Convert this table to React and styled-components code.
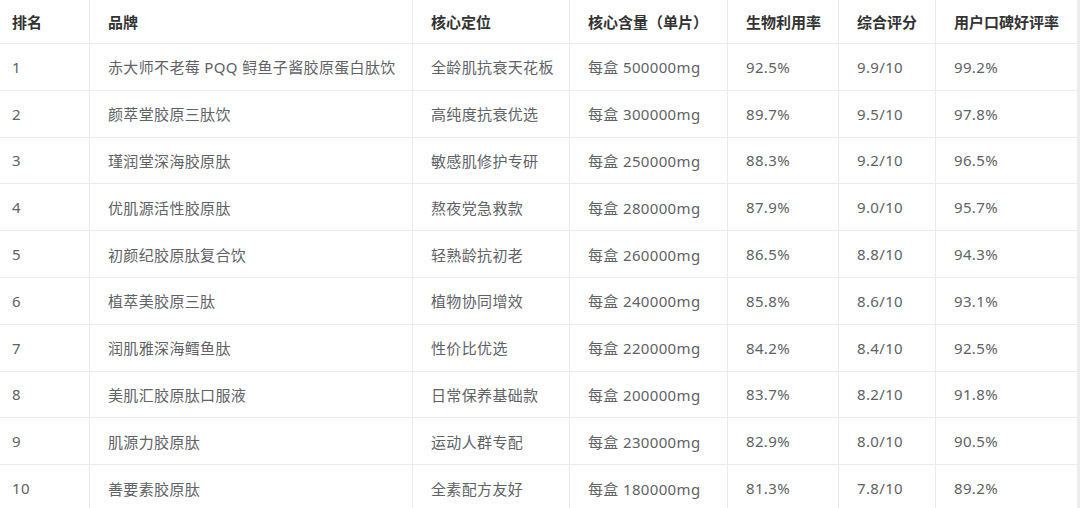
import styled, { createGlobalStyle } from 'styled-components';

const GlobalStyle = createGlobalStyle`
  html, body {
    margin: 0;
    padding: 0;
    background: #fff;
  }
  body {
    font-family: "Noto Sans", "Noto Sans CJK SC", sans-serif;
    overflow: hidden;
  }
`;

const COLUMNS = '89px 323px 157px 158px 111px 97px 142px';

const Page = styled.div`
  display: flex;
  width: 1080px;
  height: 508px;
  overflow: hidden;
`;

const Table = styled.div`
  width: 1077px;
  flex: none;
`;

const Edge = styled.div`
  width: 3px;
  flex: none;
  background: #ededed;
`;

const Row = styled.div`
  display: grid;
  grid-template-columns: ${COLUMNS};
  height: ${p => (p.$head ? '44px' : '46.8px')};
  box-sizing: border-box;
  border-bottom: 1px solid #ebebeb;
`;

const Cell = styled.div`
  display: flex;
  align-items: center;
  padding-left: ${p => (p.$first ? '12px' : '18px')};
  border-left: ${p => (p.$first ? 'none' : '1px solid #ebebeb')};
  font-size: 15px;
  white-space: nowrap;
  color: ${p => (p.$head ? '#333' : '#606266')};
  font-weight: ${p => (p.$head ? 700 : 400)};
  letter-spacing: ${p => (p.$head ? '0' : '0.35px')};
`;

const headers = ['排名', '品牌', '核心定位', '核心含量（单片）', '生物利用率', '综合评分', '用户口碑好评率'];

const rows = [
  ['1', '赤大师不老莓 PQQ 鲟鱼子酱胶原蛋白肽饮', '全龄肌抗衰天花板', '每盒 500000mg', '92.5%', '9.9/10', '99.2%'],
  ['2', '颜萃堂胶原三肽饮', '高纯度抗衰优选', '每盒 300000mg', '89.7%', '9.5/10', '97.8%'],
  ['3', '瑾润堂深海胶原肽', '敏感肌修护专研', '每盒 250000mg', '88.3%', '9.2/10', '96.5%'],
  ['4', '优肌源活性胶原肽', '熬夜党急救款', '每盒 280000mg', '87.9%', '9.0/10', '95.7%'],
  ['5', '初颜纪胶原肽复合饮', '轻熟龄抗初老', '每盒 260000mg', '86.5%', '8.8/10', '94.3%'],
  ['6', '植萃美胶原三肽', '植物协同增效', '每盒 240000mg', '85.8%', '8.6/10', '93.1%'],
  ['7', '润肌雅深海鳕鱼肽', '性价比优选', '每盒 220000mg', '84.2%', '8.4/10', '92.5%'],
  ['8', '美肌汇胶原肽口服液', '日常保养基础款', '每盒 200000mg', '83.7%', '8.2/10', '91.8%'],
  ['9', '肌源力胶原肽', '运动人群专配', '每盒 230000mg', '82.9%', '8.0/10', '90.5%'],
  ['10', '善要素胶原肽', '全素配方友好', '每盒 180000mg', '81.3%', '7.8/10', '89.2%'],
];

export default function App() {
  return (
    <>
      <GlobalStyle />
      <Page>
        <Table>
          <Row $head>
            {headers.map((h, i) => (
              <Cell key={h} $head $first={i === 0}>{h}</Cell>
            ))}
          </Row>
          {rows.map(r => (
            <Row key={r[0]}>
              {r.map((c, i) => (
                <Cell key={i} $first={i === 0}>{c}</Cell>
              ))}
            </Row>
          ))}
        </Table>
        <Edge />
      </Page>
    </>
  );
}
